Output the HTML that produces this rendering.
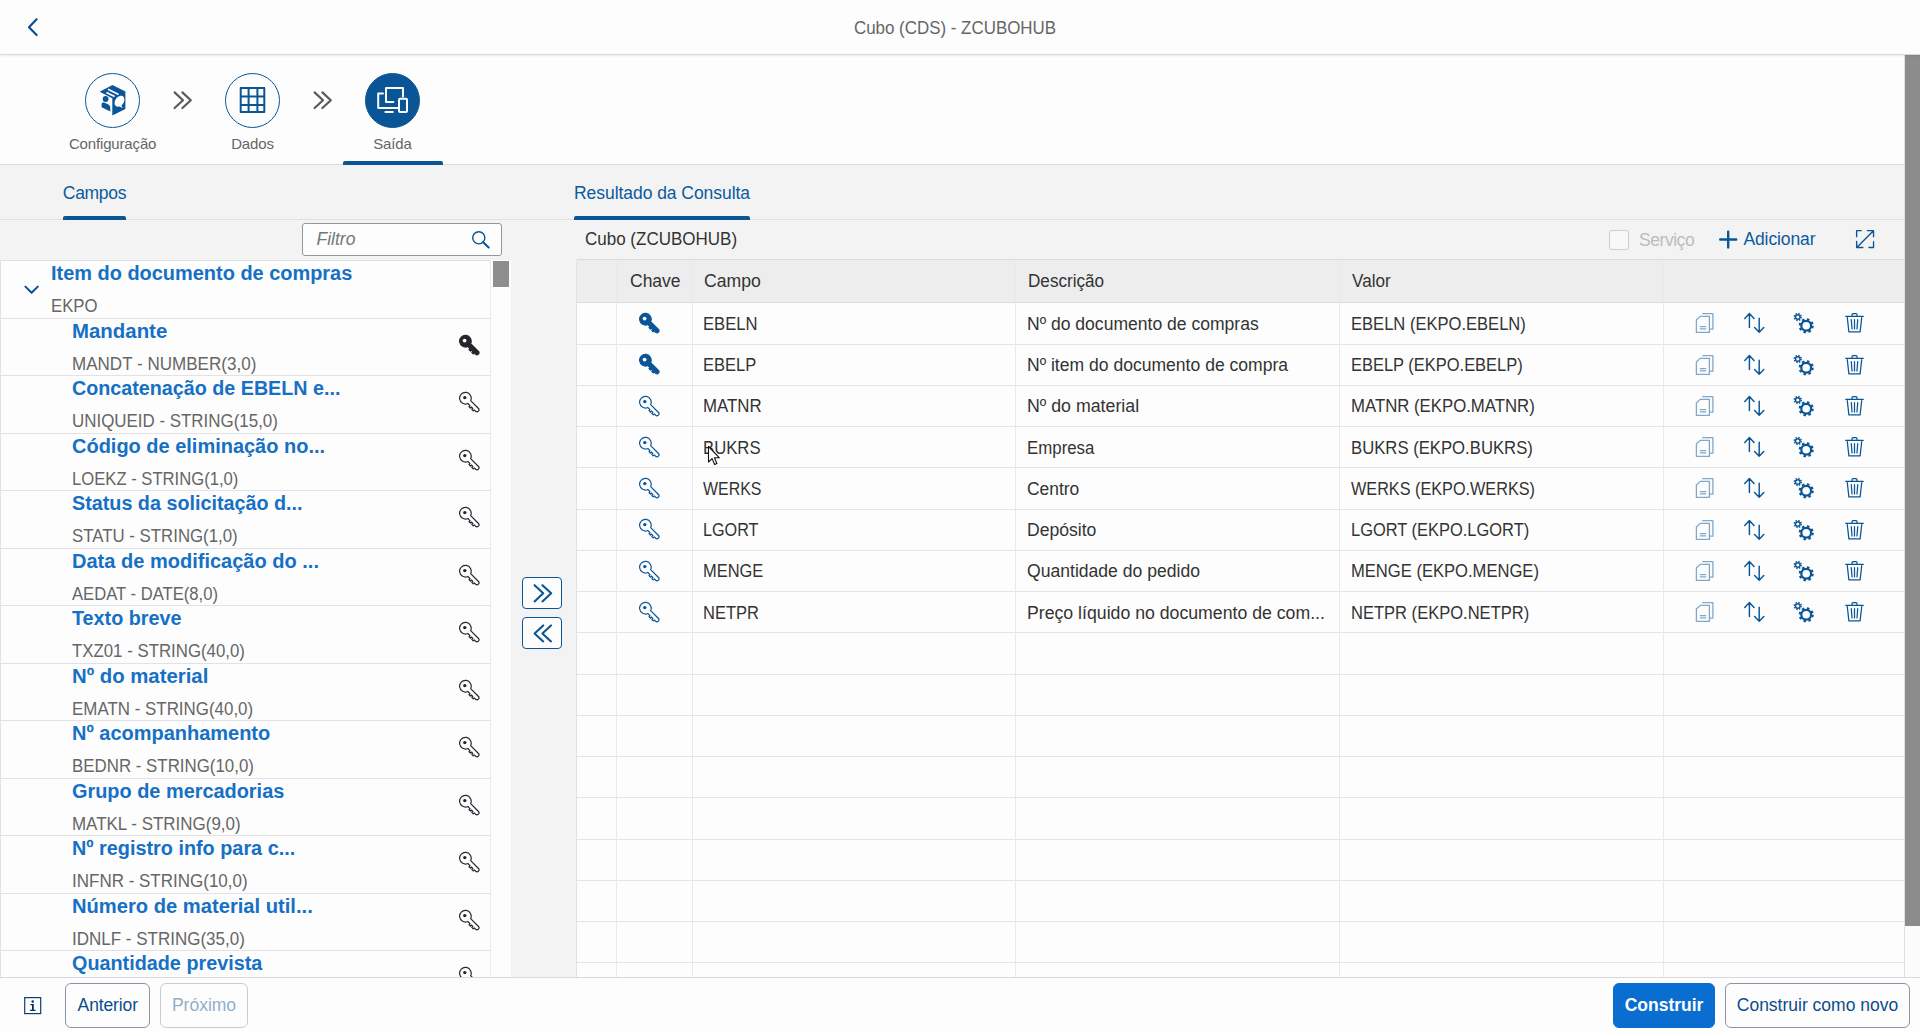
<!DOCTYPE html>
<html lang="pt-BR">
<head>
<meta charset="utf-8">
<title>Cubo (CDS) - ZCUBOHUB</title>
<style>
*{box-sizing:border-box;margin:0;padding:0}
html,body{width:1920px;height:1031px;overflow:hidden;background:#fdfdfd}
body{position:relative;font-family:"Liberation Sans",Arial,Helvetica,sans-serif;font-size:17.5px;color:#333;-webkit-font-smoothing:antialiased}
.abs{position:absolute}
svg{display:block;position:absolute;overflow:visible}
/* header */
#hdr{left:0;top:0;width:1920px;height:55px;background:#fdfdfd;border-bottom:1px solid #d9d9d9;box-shadow:0 1px 2px rgba(0,0,0,.07);z-index:2}
#hdr .ttl{left:0;top:0;width:1910px;height:55px;line-height:56.500px;text-align:center;font-size:17.5px;color:#666}
/* wizard */
#wiz{left:0;top:55px;width:1905px;height:110px;background:#fdfdfd;border-bottom:1px solid #dedee0}
.step{top:18px;width:55px;height:55px;border-radius:50%;border:1.250px solid #0a5596;background:#fdfdfd}
.step.on{background:#0a5596}
.slab{top:80px;width:140px;height:18px;line-height:18px;text-align:center;font-size:15px;color:#666;letter-spacing:-.15px}
.sline{left:343px;top:106px;width:100px;height:4px;background:#0a5596;border-radius:2px 2px 0 0}
/* tab strip */
#tabs{left:0;top:165px;width:1905px;height:55px;background:#f3f3f3;border-bottom:1px solid #e0e0e2}
.tab{top:0;height:55px;line-height:56px;font-size:17.5px;color:#0a5a9e;white-space:nowrap}
.tline{top:51px;height:4px;background:#0a5596;border-radius:2px 2px 0 0}
/* left */
#ltool{left:0;top:220px;width:511px;height:41px;background:#f3f3f3}
#filt{left:302px;top:223px;width:200px;height:33px;background:#fdfdfd;border:1px solid #93979c;border-radius:3px}
#filt span{left:13.500px;top:0;line-height:31px;font-style:italic;color:#74777a;font-size:17.5px}
#list{left:0;top:260px;width:490px;height:717px;background:#fdfdfd;border-left:1px solid #e2e2e4;border-top:1px solid #e0e0e2;overflow:hidden}
.li{position:relative;height:57.5px;border-bottom:1px solid #e2e2e4}
.li b,.li i,.tr>span,#rtool .t{transform-origin:0 50%}
.li b{position:absolute;left:71.200px;top:1px;line-height:22px;font-size:20px;font-weight:bold;color:#1670c4;white-space:nowrap}
.li i{position:absolute;left:71.200px;top:34px;line-height:22px;font-style:normal;font-size:17.5px;color:#666;white-space:nowrap}
.li.root b,.li.root i{left:49.800px}
.li svg{left:457.200px;top:15.200px}
#lsb{left:490px;top:260px;width:21px;height:717px;background:#fdfdfd;border-left:1px solid #ebebee}
#lsb div{position:absolute;left:2.300px;top:1px;width:15.700px;height:26px;background:#8e8e8e}
/* middle */
#mid{left:511px;top:220px;width:66px;height:757px;background:#f3f3f3}
.mb{left:522px;width:40px;height:32px;background:#fdfdfd;border:1px solid #0a5596;border-radius:4px}
/* right */
#rtool{left:577px;top:220px;width:1328px;height:40px;background:#f3f3f3;border-bottom:1px solid #dadada}
#rtool .t{left:8.400px;top:0;line-height:39px;font-size:17.5px;color:#333;white-space:nowrap}
#tbl{left:576px;top:260px;width:1329px;height:717px;background:#fdfdfd;overflow:hidden;border-left:1px solid #e2e2e5}
.tr{position:relative;height:41.25px;border-bottom:1px solid #e6e6e9}
.tr.h{background:#ededed;border-bottom:1px solid #dcdcdc;height:43.25px}
.tr.h>span{top:1px}
.tr>span{position:absolute;top:.5px;line-height:41px;white-space:nowrap;color:#333;font-size:17.5px}
.vl{top:0;width:1px;height:717px;background:#e8e8ee}
/* footer */
#ftr{left:0;top:977px;width:1920px;height:54px;background:#fdfdfd;border-top:1px solid #d9d9db}
.btn{top:5.300px;height:44.500px;line-height:42.500px;border:1px solid #8d93a6;border-radius:6px;text-align:center;font-size:17.5px;color:#0b4d8c;background:#fdfdfd;white-space:nowrap}
.btn.dis{opacity:.45}
.btn.em{background:#0a6ed1;border-color:#0a6ed1;color:#fff;font-weight:bold}
/* page scrollbar */
#psb{left:1904px;top:55px;width:16px;height:922px;background:#fbfbfb;border-left:1px solid #e0e0e0}
#psb div{position:absolute;left:0;top:0;width:16px;height:871px;background:#8c8c8c}
</style>
</head>
<body>
<svg width="0" height="0" style="position:absolute"><defs>
<symbol id="kf" viewBox="0 0 22 22"><path d="M12.660 9.640 20.480 17.460A2 2 0 0 1 17.660 20.280L16.200 18.820l-1 1-1.400-1.400 1-1-1.400-1.400-1 1-1.400-1.400 1-1L9.840 12.460A5.800 5.800 0 1 1 12.660 9.640Z" stroke-width="1.200" stroke-linejoin="round"/><circle cx="6.600" cy="6.600" r="1.900" fill="#fdfdfd" stroke="none"/></symbol>
<symbol id="ko" viewBox="0 0 22 22"><path d="M12.660 9.640 20.480 17.460A2 2 0 0 1 17.660 20.280L16.200 18.820l-1 1-1.400-1.400 1-1-1.400-1.400-1 1-1.400-1.400 1-1L9.840 12.460A5.800 5.800 0 1 1 12.660 9.640Z" fill="none" stroke-width="1.200" stroke-linejoin="round"/><circle cx="6.800" cy="6.600" r="1.700" stroke="none"/></symbol>
<symbol id="cp" viewBox="0 0 20 22"><path d="M7.200 1.600h10.700v15.600h-3.400M1.400 8 5.200 4.400h9.200v16H1.400ZM4.800 14.600h6.400M4.800 16.800h6.400" fill="none" stroke-width="1.300" stroke-linejoin="round"/></symbol>
<symbol id="so" viewBox="0 0 22 22"><path d="M5.400 15.600V1.600M.8 6.400 5.400 1.600 10 6.400M15.200 6.200v14M10.600 15.600 15.200 20.200 19.800 15.600" fill="none" stroke-width="1.450" stroke-linecap="round" stroke-linejoin="round"/></symbol>
<symbol id="ge" viewBox="0 0 22 22"><circle cx="13.200" cy="13.800" r="4.900" fill="none" stroke-width="2.200"/><circle cx="13.200" cy="13.800" r="6.500" fill="none" stroke-width="2.100" stroke-dasharray="2.500 2.605"/><circle cx="4.800" cy="5" r="2.300" fill="none" stroke-width="1.500"/><circle cx="4.800" cy="5" r="3.500" fill="none" stroke-width="1.400" stroke-dasharray="1.400 1.350"/></symbol>
<symbol id="tr" viewBox="0 0 20 22"><path d="M.8 4.600h18.400M7.400 4.200V2.600c0-.6.400-1 1-1h3.200c.6 0 1 .4 1 1v1.600M2.400 5.800l1.700 15h11.800L17.600 5.800M6.600 8l.8 9.800M10 8v9.800M13.400 8l-.8 9.800" fill="none" stroke-width="1.300" stroke-linecap="round" stroke-linejoin="round"/></symbol>
</defs></svg>
<div id="hdr" class="abs"><svg style="left:24px;top:15px" width="18" height="24" viewBox="0 0 18 24"><path d="M12.6 4.200 5 12.200 12.600 20" fill="none" stroke="#0a4f90" stroke-width="2.200" stroke-linecap="round" stroke-linejoin="round"/></svg><div class="ttl abs" style="transform:scaleX(0.9668)">Cubo (CDS) - ZCUBOHUB</div></div>
<div id="wiz" class="abs">
<div class="step abs" style="left:85px"><svg style="left:-1.250px;top:-1.250px" width="55" height="55" viewBox="0 0 55 55"><path d="M27.500 12 40.400 18.600 40.400 36 27.300 42.400 27.300 25.300 14.600 18.700Z" fill="#0a5596"/><path d="M23 16.200 33.600 21.600M21.400 19.400 29.600 23.600" stroke="#fdfdfd" stroke-width="1.700" fill="none"/><path d="M29.600 30.200c0-3.200 2.600-6.600 5.600-7.400 2.600-.6 4.200 1 4.200 3.600 0 2.200-1.200 4.600-3 6l1.400 2.600-3.400-1.400c-2.800.6-4.800-.8-4.800-3.400Z" fill="#fdfdfd"/><circle cx="20.600" cy="26" r="2.900" fill="#0a5596"/><path d="M16.600 31.400c0-1.600 1.400-2.200 3-1.600l3.400 1.500c1.500.7 2.300 2 2.300 3.600v3.500l-8.700-4.200Z" fill="#0a5596"/></svg></div>
<svg style="left:172px;top:35px" width="22" height="22" viewBox="0 0 22 22"><path d="M2.600 2.400 11 10.200 2.600 18M10.400 2.400 18.800 10.200 10.400 18" fill="none" stroke="#5a5a5e" stroke-width="2.200" stroke-linecap="round" stroke-linejoin="round"/></svg>
<div class="step abs" style="left:225px"><svg style="left:-1.250px;top:-1.250px" width="55" height="55" viewBox="0 0 55 55"><path d="M15.700 15.100h23.600v23.800H15.700ZM23.600 15.100v23.800M32.400 15.100v23.800M15.700 23.500h23.600M15.700 32.100h23.600" fill="none" stroke="#0a5596" stroke-width="2" stroke-linejoin="round"/></svg></div>
<svg style="left:312px;top:35px" width="22" height="22" viewBox="0 0 22 22"><path d="M2.600 2.400 11 10.200 2.600 18M10.400 2.400 18.800 10.200 10.400 18" fill="none" stroke="#5a5a5e" stroke-width="2.200" stroke-linecap="round" stroke-linejoin="round"/></svg>
<div class="step on abs" style="left:365px"><svg style="left:-1.250px;top:-1.250px" width="55" height="55" viewBox="0 0 55 55"><path d="M28.400 29h-7.400V15h17v8.600M18 20.400h-4.800V35h19.400M20.400 39h7.400" fill="none" stroke="#fdfdfd" stroke-width="2" stroke-linejoin="round" stroke-linecap="round"/><rect x="34" y="25.800" width="8" height="13.200" rx="1" fill="none" stroke="#fdfdfd" stroke-width="2"/></svg></div>
<div class="slab abs" style="left:42.600px">Configuração</div>
<div class="slab abs" style="left:182.500px">Dados</div>
<div class="slab abs" style="left:322.500px">Saída</div>
<div class="sline abs"></div>
</div>
<div id="tabs" class="abs">
<div role="tab" class="tab abs" style="left:62.800px;letter-spacing:-.3px">Campos</div><div class="tline abs" style="left:63px;width:63px"></div>
<div role="tab" class="tab abs" style="left:574px;letter-spacing:-.05px">Resultado da Consulta</div><div class="tline abs" style="left:574px;width:176px"></div>
</div>
<div id="ltool" class="abs"></div>
<div id="filt" class="abs"><span class="abs">Filtro</span><svg style="left:168px;top:6px" width="19" height="19" viewBox="0 0 20 20"><circle cx="8.200" cy="8.200" r="6.400" fill="none" stroke="#0a5596" stroke-width="1.500"/><path d="M12.800 12.800 18.600 18.400" stroke="#0a5596" stroke-width="2.200" stroke-linecap="round"/></svg></div>
<div id="list" class="abs" role="tree">
<div class="li root" role="treeitem" aria-expanded="true"><svg style="left:22px;top:22px" width="18" height="14" viewBox="0 0 18 14"><path d="M2.400 3.600 8.600 9.800 14.800 3.600" fill="none" stroke="#0a4f90" stroke-width="2" stroke-linecap="round" stroke-linejoin="round"/></svg><b style="transform:scaleX(0.9968)">Item do documento de compras</b><i style="transform:scaleX(0.9559)">EKPO</i></div>
<div class="li" role="treeitem"><b style="transform:scaleX(1.0203)">Mandante</b><i style="transform:scaleX(0.9738)">MANDT - NUMBER(3,0)</i><svg width="22" height="22" fill="#26262e" stroke="#26262e"><use href="#kf"/></svg></div>
<div class="li" role="treeitem"><b style="transform:scaleX(0.9858)">Concatenação de EBELN e...</b><i style="transform:scaleX(0.9668)">UNIQUEID - STRING(15,0)</i><svg width="22" height="22" fill="#26262e" stroke="#26262e"><use href="#ko"/></svg></div>
<div class="li" role="treeitem"><b style="transform:scaleX(0.9987)">Código de eliminação no...</b><i style="transform:scaleX(0.9507)">LOEKZ - STRING(1,0)</i><svg width="22" height="22" fill="#26262e" stroke="#26262e"><use href="#ko"/></svg></div>
<div class="li" role="treeitem"><b style="transform:scaleX(0.9876)">Status da solicitação d...</b><i style="transform:scaleX(0.9610)">STATU - STRING(1,0)</i><svg width="22" height="22" fill="#26262e" stroke="#26262e"><use href="#ko"/></svg></div>
<div class="li" role="treeitem"><b style="transform:scaleX(1.0011)">Data de modificação do ...</b><i style="transform:scaleX(0.9499)">AEDAT - DATE(8,0)</i><svg width="22" height="22" fill="#26262e" stroke="#26262e"><use href="#ko"/></svg></div>
<div class="li" role="treeitem"><b style="transform:scaleX(0.9890)">Texto breve</b><i style="transform:scaleX(0.9611)">TXZ01 - STRING(40,0)</i><svg width="22" height="22" fill="#26262e" stroke="#26262e"><use href="#ko"/></svg></div>
<div class="li" role="treeitem"><b style="transform:scaleX(1.0171)">Nº do material</b><i style="transform:scaleX(0.9670)">EMATN - STRING(40,0)</i><svg width="22" height="22" fill="#26262e" stroke="#26262e"><use href="#ko"/></svg></div>
<div class="li" role="treeitem"><b style="transform:scaleX(0.9988)">Nº acompanhamento</b><i style="transform:scaleX(0.9643)">BEDNR - STRING(10,0)</i><svg width="22" height="22" fill="#26262e" stroke="#26262e"><use href="#ko"/></svg></div>
<div class="li" role="treeitem"><b style="transform:scaleX(0.9947)">Grupo de mercadorias</b><i style="transform:scaleX(0.9688)">MATKL - STRING(9,0)</i><svg width="22" height="22" fill="#26262e" stroke="#26262e"><use href="#ko"/></svg></div>
<div class="li" role="treeitem"><b style="transform:scaleX(0.9914)">Nº registro info para c...</b><i style="transform:scaleX(0.9713)">INFNR - STRING(10,0)</i><svg width="22" height="22" fill="#26262e" stroke="#26262e"><use href="#ko"/></svg></div>
<div class="li" role="treeitem"><b style="transform:scaleX(1.0076)">Número de material util...</b><i style="transform:scaleX(0.9712)">IDNLF - STRING(35,0)</i><svg width="22" height="22" fill="#26262e" stroke="#26262e"><use href="#ko"/></svg></div>
<div class="li" role="treeitem"><b style="transform:scaleX(0.9897)">Quantidade prevista</b><svg width="22" height="22" fill="#26262e" stroke="#26262e"><use href="#ko"/></svg></div>
</div>
<div id="lsb" class="abs"><div></div></div>
<div id="mid" class="abs"></div>
<div class="mb abs" style="top:577px"><svg style="left:9px;top:5px" width="22" height="22" viewBox="0 0 22 22"><path d="M2.600 2.200 11.200 10.200 2.600 18.400M10.400 2.200 19.200 10.200 10.400 18.400" fill="none" stroke="#0a5596" stroke-width="2.100" stroke-linecap="round" stroke-linejoin="round"/></svg></div>
<div class="mb abs" style="top:617px"><svg style="left:9px;top:5px" width="22" height="22" viewBox="0 0 22 22"><path d="M11.200 2.400 2.600 10.400 11.200 18.400M19 2.400 10.400 10.400 19 18.400" fill="none" stroke="#0a5596" stroke-width="2.100" stroke-linecap="round" stroke-linejoin="round"/></svg></div>
<div id="rtool" class="abs"><div class="t abs" style="transform:scaleX(0.9713)">Cubo (ZCUBOHUB)</div>
<div class="abs" style="left:1032px;top:10px;width:20px;height:20px;border:1px solid #cfcfcf;border-radius:3px;background:#f8f8f8"></div>
<div class="abs" style="left:1062px;top:0;line-height:41px;color:#bcbcbc;font-size:17.5px;letter-spacing:-.45px">Serviço</div>
<svg style="left:1142px;top:10px" width="20" height="20" viewBox="0 0 20 20"><path d="M9.200 1.600v15.800M1.200 9.500h16" fill="none" stroke="#0a5596" stroke-width="2.400" stroke-linecap="round"/></svg>
<div class="abs" style="left:1166.400px;top:0;line-height:39px;color:#0a5a9e;font-size:17.5px;letter-spacing:-.1px">Adicionar</div>
<svg style="left:1278px;top:9px" width="20" height="20" viewBox="0 0 22 22"><path d="M13.600 1.800h6.800v6.800M20 2.200 2.200 20M1.800 13.600v6.800h6.800M1.800 8.400V1.800h5M20.400 14v6.400h-5" fill="none" stroke="#0a5596" stroke-width="1.500" stroke-linecap="round" stroke-linejoin="round"/></svg>
</div>
<div id="tbl" class="abs" role="table">
<div class="tr h" role="row"><span style="left:53px;transform:scaleX(0.9998)">Chave</span><span style="left:127px;transform:scaleX(1.0057)">Campo</span><span style="left:451px;transform:scaleX(0.9785)">Descrição</span><span style="left:775px;transform:scaleX(0.9771)">Valor</span></div>
<div class="tr" role="row"><svg style="left:60.700px;top:8.800px" width="22" height="22" fill="#0a5596" stroke="#0a5596"><use href="#kf"/></svg><span style="left:126px;transform:scaleX(0.9489)">EBELN</span><span style="left:450px;transform:scaleX(1.0025)">Nº do documento de compras</span><span style="left:773.600px;transform:scaleX(0.9461)">EBELN (EKPO.EBELN)</span><svg style="left:1117.600px;top:9px;opacity:.5" width="20" height="22" stroke="#0a5596"><use href="#cp"/></svg><svg style="left:1167px;top:9px" width="22" height="22" stroke="#0a5596"><use href="#so"/></svg><svg style="left:1216.400px;top:9px" width="22" height="22" stroke="#0a5596"><use href="#ge"/></svg><svg style="left:1268px;top:9px" width="19" height="21" stroke="#0a5596"><use href="#tr"/></svg></div>
<div class="tr" role="row"><svg style="left:60.700px;top:8.800px" width="22" height="22" fill="#0a5596" stroke="#0a5596"><use href="#kf"/></svg><span style="left:126px;transform:scaleX(0.9420)">EBELP</span><span style="left:450px;transform:scaleX(1.0031)">Nº item do documento de compra</span><span style="left:773.600px;transform:scaleX(0.9406)">EBELP (EKPO.EBELP)</span><svg style="left:1117.600px;top:9px;opacity:.5" width="20" height="22" stroke="#0a5596"><use href="#cp"/></svg><svg style="left:1167px;top:9px" width="22" height="22" stroke="#0a5596"><use href="#so"/></svg><svg style="left:1216.400px;top:9px" width="22" height="22" stroke="#0a5596"><use href="#ge"/></svg><svg style="left:1268px;top:9px" width="19" height="21" stroke="#0a5596"><use href="#tr"/></svg></div>
<div class="tr" role="row"><svg style="left:60.700px;top:8.800px" width="22" height="22" fill="#0a5596" stroke="#0a5596"><use href="#ko"/></svg><span style="left:126px;transform:scaleX(0.9637)">MATNR</span><span style="left:450px;transform:scaleX(1.0148)">Nº do material</span><span style="left:773.600px;transform:scaleX(0.9579)">MATNR (EKPO.MATNR)</span><svg style="left:1117.600px;top:9px;opacity:.5" width="20" height="22" stroke="#0a5596"><use href="#cp"/></svg><svg style="left:1167px;top:9px" width="22" height="22" stroke="#0a5596"><use href="#so"/></svg><svg style="left:1216.400px;top:9px" width="22" height="22" stroke="#0a5596"><use href="#ge"/></svg><svg style="left:1268px;top:9px" width="19" height="21" stroke="#0a5596"><use href="#tr"/></svg></div>
<div class="tr" role="row"><svg style="left:60.700px;top:8.800px" width="22" height="22" fill="#0a5596" stroke="#0a5596"><use href="#ko"/></svg><span style="left:126px;transform:scaleX(0.9547)">BUKRS</span><span style="left:450px;transform:scaleX(0.9624)">Empresa</span><span style="left:773.600px;transform:scaleX(0.9540)">BUKRS (EKPO.BUKRS)</span><svg style="left:1117.600px;top:9px;opacity:.5" width="20" height="22" stroke="#0a5596"><use href="#cp"/></svg><svg style="left:1167px;top:9px" width="22" height="22" stroke="#0a5596"><use href="#so"/></svg><svg style="left:1216.400px;top:9px" width="22" height="22" stroke="#0a5596"><use href="#ge"/></svg><svg style="left:1268px;top:9px" width="19" height="21" stroke="#0a5596"><use href="#tr"/></svg></div>
<div class="tr" role="row"><svg style="left:60.700px;top:8.800px" width="22" height="22" fill="#0a5596" stroke="#0a5596"><use href="#ko"/></svg><span style="left:126px;transform:scaleX(0.9100)">WERKS</span><span style="left:450px;transform:scaleX(0.9948)">Centro</span><span style="left:773.600px;transform:scaleX(0.9275)">WERKS (EKPO.WERKS)</span><svg style="left:1117.600px;top:9px;opacity:.5" width="20" height="22" stroke="#0a5596"><use href="#cp"/></svg><svg style="left:1167px;top:9px" width="22" height="22" stroke="#0a5596"><use href="#so"/></svg><svg style="left:1216.400px;top:9px" width="22" height="22" stroke="#0a5596"><use href="#ge"/></svg><svg style="left:1268px;top:9px" width="19" height="21" stroke="#0a5596"><use href="#tr"/></svg></div>
<div class="tr" role="row"><svg style="left:60.700px;top:8.800px" width="22" height="22" fill="#0a5596" stroke="#0a5596"><use href="#ko"/></svg><span style="left:126px;transform:scaleX(0.9249)">LGORT</span><span style="left:450px;transform:scaleX(1.0047)">Depósito</span><span style="left:773.600px;transform:scaleX(0.9397)">LGORT (EKPO.LGORT)</span><svg style="left:1117.600px;top:9px;opacity:.5" width="20" height="22" stroke="#0a5596"><use href="#cp"/></svg><svg style="left:1167px;top:9px" width="22" height="22" stroke="#0a5596"><use href="#so"/></svg><svg style="left:1216.400px;top:9px" width="22" height="22" stroke="#0a5596"><use href="#ge"/></svg><svg style="left:1268px;top:9px" width="19" height="21" stroke="#0a5596"><use href="#tr"/></svg></div>
<div class="tr" role="row"><svg style="left:60.700px;top:8.800px" width="22" height="22" fill="#0a5596" stroke="#0a5596"><use href="#ko"/></svg><span style="left:126px;transform:scaleX(0.9398)">MENGE</span><span style="left:450px;transform:scaleX(1.0043)">Quantidade do pedido</span><span style="left:773.600px;transform:scaleX(0.9475)">MENGE (EKPO.MENGE)</span><svg style="left:1117.600px;top:9px;opacity:.5" width="20" height="22" stroke="#0a5596"><use href="#cp"/></svg><svg style="left:1167px;top:9px" width="22" height="22" stroke="#0a5596"><use href="#so"/></svg><svg style="left:1216.400px;top:9px" width="22" height="22" stroke="#0a5596"><use href="#ge"/></svg><svg style="left:1268px;top:9px" width="19" height="21" stroke="#0a5596"><use href="#tr"/></svg></div>
<div class="tr" role="row"><svg style="left:60.700px;top:8.800px" width="22" height="22" fill="#0a5596" stroke="#0a5596"><use href="#ko"/></svg><span style="left:126px;transform:scaleX(0.9423)">NETPR</span><span style="left:450px;transform:scaleX(1.0106)">Preço líquido no documento de com...</span><span style="left:773.600px;transform:scaleX(0.9447)">NETPR (EKPO.NETPR)</span><svg style="left:1117.600px;top:9px;opacity:.5" width="20" height="22" stroke="#0a5596"><use href="#cp"/></svg><svg style="left:1167px;top:9px" width="22" height="22" stroke="#0a5596"><use href="#so"/></svg><svg style="left:1216.400px;top:9px" width="22" height="22" stroke="#0a5596"><use href="#ge"/></svg><svg style="left:1268px;top:9px" width="19" height="21" stroke="#0a5596"><use href="#tr"/></svg></div>
<div class="tr"></div>
<div class="tr"></div>
<div class="tr"></div>
<div class="tr"></div>
<div class="tr"></div>
<div class="tr"></div>
<div class="tr"></div>
<div class="tr"></div>
<div class="tr"></div>
<div class="vl abs" style="left:39px"></div>
<div class="vl abs" style="left:115px"></div>
<div class="vl abs" style="left:438px"></div>
<div class="vl abs" style="left:762px"></div>
<div class="vl abs" style="left:1086px"></div>
</div>
<svg style="left:707px;top:445px" width="14" height="22" viewBox="0 0 14 22"><path d="M1.500 1.500v15.500l3.600-3.400 2.500 5.900 2.300-1-2.500-5.700h5Z" fill="#fff" stroke="#111" stroke-width="1.100" stroke-linejoin="round"/></svg>
<div id="ftr" class="abs">
<svg style="left:23px;top:17px" width="20" height="20" viewBox="0 0 20 20"><rect x="1.700" y="2.600" width="16" height="16" fill="none" stroke="#0a3f7c" stroke-width="1.200"/><path d="M7.400 9h3.400v5.800h1.700v1.300H7.100v-1.300h1.900v-4.500H7.400Z" fill="#0a2f5c"/><circle cx="9.700" cy="6.600" r="1.250" fill="#0a2f5c"/></svg>
<div role="button" class="btn abs" style="left:65px;width:85px;letter-spacing:-.12px;text-indent:.5px">Anterior</div>
<div role="button" aria-disabled="true" class="btn dis abs" style="left:160px;width:88px">Próximo</div>
<div role="button" class="btn em abs" style="left:1613px;width:102px">Construir</div>
<div role="button" class="btn abs" style="left:1725px;width:185px">Construir como novo</div>
</div>
<div id="psb" class="abs"><div></div></div>
</body>
</html>
